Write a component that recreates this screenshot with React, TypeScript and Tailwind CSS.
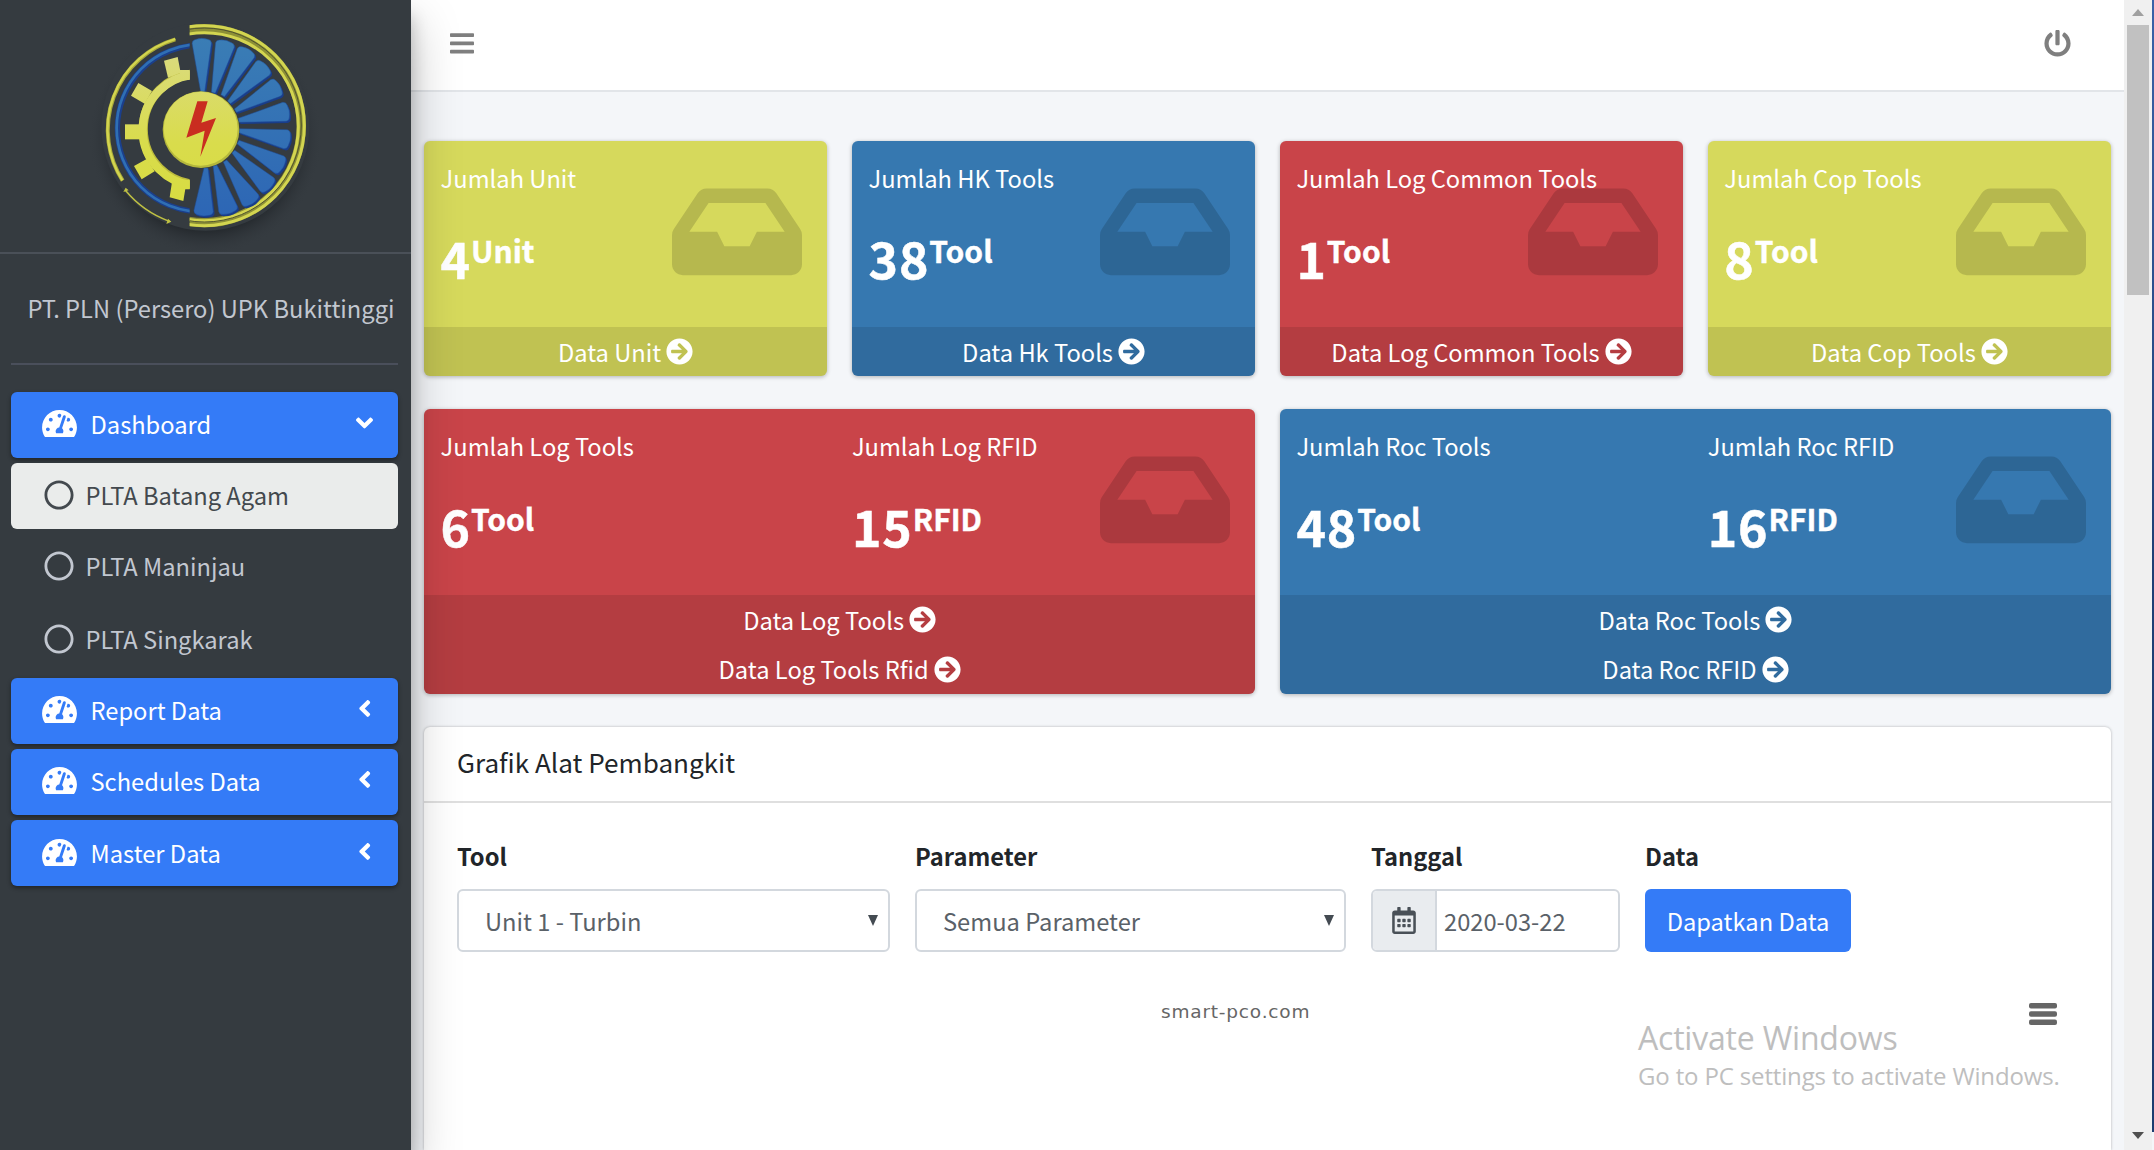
import React from "react";
import {
  FaAngleDown,
  FaAngleLeft,
  FaArrowCircleRight,
  FaInbox,
  FaPowerOff,
  FaRegCalendarAlt,
  FaRegCircle,
  FaTachometerAlt,
} from "react-icons/fa";

/* [inner x, inner y, outer x, outer y] of every turbine blade */
const blades = [
  [338, 246, 335, 86],
  [370, 248, 408, 92],
  [398, 257, 474, 117],
  [417, 277, 528, 165],
  [436, 302, 569, 227],
  [446, 331, 597, 303],
  [448, 362, 600, 390],
  [444, 396, 580, 470],
  [430, 425, 541, 533],
  [405, 453, 488, 580],
  [375, 467, 418, 610],
  [348, 474, 340, 617],
];

const bladePath = ([x1, y1, x2, y2]: number[]) => {
  const len = Math.hypot(x2 - x1, y2 - y1);
  const ux = (x2 - x1) / len;
  const uy = (y2 - y1) / len;
  const at = (along: number, side: number) =>
    `${(x1 + ux * along - uy * side).toFixed(1)} ${(y1 + uy * along + ux * side).toFixed(1)}`;
  return `M${at(0, -6)} L${at(len - 14, -29)} Q${at(len - 4, -29)} ${at(len - 2, -18)} Q${at(len + 4, 0)} ${at(len - 2, 18)} Q${at(len - 4, 29)} ${at(len - 14, 29)} L${at(0, 6)}Z`;
};

function Logo() {
  return (
    <svg viewBox="0 0 690 690" className="h-[230px] w-[230px] overflow-visible">
      <defs>
        <linearGradient id="gold" gradientUnits="userSpaceOnUse" x1="0" y1="140" x2="0" y2="570">
          <stop offset="0" stopColor="#dadb7c" />
          <stop offset="0.6" stopColor="#d9dc4c" />
          <stop offset="1" stopColor="#d8dc42" />
        </linearGradient>
        <linearGradient id="blue" gradientUnits="userSpaceOnUse" x1="0" y1="85" x2="0" y2="620">
          <stop offset="0" stopColor="#3a7db5" />
          <stop offset="1" stopColor="#2d66b5" />
        </linearGradient>
        <radialGradient id="halo">
          <stop offset="0.8" stopColor="#1d2125" stopOpacity="0.6" />
          <stop offset="1" stopColor="#343a40" stopOpacity="0" />
        </radialGradient>
        <clipPath id="right">
          <rect x="299" y="0" width="391" height="690" />
        </clipPath>
        <clipPath id="left">
          <rect x="0" y="0" width="299" height="690" />
        </clipPath>
      </defs>
      <circle cx="346" cy="385" r="350" fill="url(#halo)" />
      <circle cx="346" cy="350" r="312" fill="#353b40" />
      <g clipPath="url(#right)" fill="none">
        <circle cx="343" cy="347" r="291" stroke="#8d9036" strokeWidth="28" />
        <circle cx="343" cy="347" r="300" stroke="#d3d550" strokeWidth="9" />
        <circle cx="343" cy="350" r="282" stroke="#d3d550" strokeWidth="9" />
        <circle cx="343" cy="345" r="291" stroke="#50532f" strokeWidth="3" />
      </g>
      <path d="M256 88A283 283 0 0 0 98 512" fill="none" stroke="#a9aa38" strokeWidth="12" />
      <path d="M256 87A283 283 0 0 0 97 511" fill="none" stroke="#d3d550" strokeWidth="7" />
      <path d="M106 541Q160 606 238 634" fill="none" stroke="#bfc143" strokeWidth="4.5" />
      <path d="M100 546L107 533L116 541Z M229 642L244 635L234 626Z" fill="#bfc143" />
      <g clipPath="url(#left)" fill="none">
        <circle cx="332" cy="355" r="250" stroke="#1b3f8c" strokeWidth="16" />
        <circle cx="331" cy="354" r="251" stroke="#2f6fb4" strokeWidth="8" />
      </g>
      <g clipPath="url(#left)">
        <circle cx="326" cy="357" r="166" fill="none" stroke="#bcbb3c" strokeWidth="27" />
        <circle cx="324" cy="360" r="166" fill="none" stroke="url(#gold)" strokeWidth="25" />
      </g>
      <g fill="url(#gold)">
        <path d="M222 152L263 141L272 188L234 203Z" />
        <path d="M145 219L186 243L164 281L123 257Z" />
        <path d="M105 343H150V388H105Z" />
        <path d="M132 468L170 447L194 484L155 508Z" />
        <path d="M246 516L288 524L280 573L239 562Z" />
        <path d="M270 180H299V210H270Z M270 510H299V538H270Z" />
      </g>
      {blades.map((b) => (
        <path key={`s${b[2]}`} d={bladePath(b)} transform="translate(4 5)" fill="#193d8b" />
      ))}
      {blades.map((b) => (
        <path key={b[2]} d={bladePath(b)} fill="url(#blue)" stroke="#1f4d98" strokeWidth="1.5" />
      ))}
      <circle cx="333" cy="359" r="115" fill="#b4b73c" />
      <circle cx="332" cy="356" r="111" fill="url(#gold)" />
      <path d="M322 274H353L334 338L378 324L331 440L344 362L289 383Z" fill="#c92d20" />
    </svg>
  );
}

function MenuItem({ label, open }: { label: string; open?: boolean }) {
  return (
    <a className="flex h-[66px] items-center rounded-[6px] bg-[#347bf7] pl-[31px] text-white shadow-[0_2px_4px_rgba(0,0,0,.4)]">
      <FaTachometerAlt className="-mt-0.5 h-[31px] w-[35px]" />
      <span className="-mt-px ml-[13.5px] flex-1">{label}</span>
      {open ? (
        <FaAngleDown className="mr-[25px] -mt-1 h-[28px] w-[17px]" />
      ) : (
        <FaAngleLeft className="mr-[27px] -mt-1 h-[27px] w-[13.5px]" />
      )}
    </a>
  );
}

function SubItem({ label, active }: { label: string; active?: boolean }) {
  return (
    <a
      className={
        active
          ? "flex h-[66px] items-center rounded-[6px] bg-[#eaeceb] pl-[33px] text-[#43494e]"
          : "flex h-[66px] items-center rounded-[6px] pl-[33px] text-[#c2c7d0]"
      }
    >
      <FaRegCircle className="-mt-0.5 h-[30px] w-[30px]" />
      <span className="-mt-px ml-[11.5px]">{label}</span>
    </a>
  );
}

type Stat = { title: string; value: string; unit: string };

function StatCard({ tone, stats, links }: { tone: string; stats: Stat[]; links: string[] }) {
  return (
    <div
      className={`relative overflow-hidden rounded-[6px] text-white shadow-[0_1px_4px_rgba(0,0,0,.28)] ${tone}`}
    >
      <FaInbox className="absolute top-[32.5px] right-[25px] h-[115.6px] w-[130px] text-black/15" />
      <div className="relative flex h-[185.5px] gap-[25px] pr-[17px] pl-[16.6px]">
        {stats.map((s) => (
          <div key={s.title} className="flex-1">
            <div className="mt-[16.5px] h-[40px] leading-[40px]">{s.title}</div>
            <div className="mt-[29.5px] flex h-[60px] items-start font-bold">
              <span className="text-[50px] leading-[60px] tracking-[0.9px] [-webkit-text-stroke:0.5px_white]">
                {s.value}
              </span>
              <span className="text-[30px] leading-[46px] [-webkit-text-stroke:0.4px_white]">{s.unit}</span>
            </div>
          </div>
        ))}
      </div>
      <div className="flex flex-col bg-black/10">
        {links.map((l) => (
          <a key={l} className="flex h-[49.5px] items-center justify-center gap-[5px]">
            <span>{l}</span>
            <FaArrowCircleRight className="h-[27px] w-[27px]" />
          </a>
        ))}
      </div>
    </div>
  );
}

function Select({ value }: { value: string }) {
  return (
    <div className="flex h-[63px] items-center justify-between rounded-[6px] border-2 border-[#d3d8de] bg-white pr-[10px] pl-[26px] text-[#5a6168]">
      <span className="mt-px">{value}</span>
      <svg viewBox="0 0 10 11" className="h-[11px] w-[10px]">
        <path d="M0 0H10L5 11Z" fill="#444b52" />
      </svg>
    </div>
  );
}

const YELLOW = "bg-[#d6d95c]";
const BLUE = "bg-[#3678b0]";
const RED = "bg-[#c94449]";

export default function App() {
  return (
    <div className="flex h-[1150px] w-[2154px] overflow-hidden bg-[#f4f6f9] font-['Noto_Sans_CJK_SC','Source_Sans_Pro',sans-serif] text-[23.7px] leading-[40px] text-[#212529]">
      <aside className="relative z-10 h-full w-[411px] shrink-0 bg-[#353b40] shadow-[0_23px_46px_rgba(0,0,0,.25),0_16px_16px_rgba(0,0,0,.22)]">
        <div className="h-[254px] border-b-2 border-[#4a5058] pt-[10px] pl-[90px]">
          <Logo />
        </div>
        <div className="mx-[11px] h-[111px] w-[387px] border-b-2 border-[#4a4f5b] pt-[34px] pl-[16.5px] whitespace-nowrap text-[#c2c7d0]">
          PT. PLN (Persero) UPK Bukittinggi
        </div>
        <nav className="mx-[11px] mt-[26.5px] flex w-[387px] flex-col gap-[5.2px]">
          <MenuItem label="Dashboard" open />
          <SubItem label="PLTA Batang Agam" active />
          <SubItem label="PLTA Maninjau" />
          <div className="mt-[1.5px]">
            <SubItem label="PLTA Singkarak" />
          </div>
          <MenuItem label="Report Data" />
          <MenuItem label="Schedules Data" />
          <MenuItem label="Master Data" />
        </nav>
      </aside>

      <div className="flex w-[1713px] flex-col">
        <header className="flex h-[92px] shrink-0 items-start justify-between border-b-2 border-[#e2e5e9] bg-white pr-[53px] pl-[39px]">
          <svg viewBox="0 0 24 21" className="mt-[33px] h-[21px] w-[24px]" fill="#7f7f7f">
            <rect y="0.2" width="24" height="3.8" rx="0.8" />
            <rect y="8.4" width="24" height="3.8" rx="0.8" />
            <rect y="16.8" width="24" height="3.8" rx="0.8" />
          </svg>
          <FaPowerOff className="mt-[30px] h-[27px] w-[27px] text-[#7f7f7f]" />
        </header>

        <main className="flex flex-1 flex-col pt-[49.4px] pr-[13px] pl-[13px]">
          <section className="grid grid-cols-4 gap-x-[24.7px] gap-y-[33px]">
            <StatCard tone={YELLOW} stats={[{ title: "Jumlah Unit", value: "4", unit: "Unit" }]} links={["Data Unit"]} />
            <StatCard tone={BLUE} stats={[{ title: "Jumlah HK Tools", value: "38", unit: "Tool" }]} links={["Data Hk Tools"]} />
            <StatCard
              tone={RED}
              stats={[{ title: "Jumlah Log Common Tools", value: "1", unit: "Tool" }]}
              links={["Data Log Common Tools"]}
            />
            <StatCard tone={YELLOW} stats={[{ title: "Jumlah Cop Tools", value: "8", unit: "Tool" }]} links={["Data Cop Tools"]} />
            <div className="col-span-2">
              <StatCard
                tone={RED}
                stats={[
                  { title: "Jumlah Log Tools", value: "6", unit: "Tool" },
                  { title: "Jumlah Log RFID", value: "15", unit: "RFID" },
                ]}
                links={["Data Log Tools", "Data Log Tools Rfid"]}
              />
            </div>
            <div className="col-span-2">
              <StatCard
                tone={BLUE}
                stats={[
                  { title: "Jumlah Roc Tools", value: "48", unit: "Tool" },
                  { title: "Jumlah Roc RFID", value: "16", unit: "RFID" },
                ]}
                links={["Data Roc Tools", "Data Roc RFID"]}
              />
            </div>
          </section>

          <section className="mt-[33.6px] flex-1 rounded-t-[6px] bg-white shadow-[0_0_3px_rgba(0,0,0,.28)]">
            <div className="h-[76px] border-b-2 border-[#dfdfdf] pt-[15px] pl-[33px] text-[26.1px] leading-[40px]">
              Grafik Alat Pembangkit
            </div>
            <div className="flex gap-[25px] pt-[33px] pl-[33px]">
              <div className="w-[433px]">
                <div className="mb-[13px] font-bold">Tool</div>
                <Select value="Unit 1 - Turbin" />
              </div>
              <div className="w-[431px]">
                <div className="mb-[13px] font-bold">Parameter</div>
                <Select value="Semua Parameter" />
              </div>
              <div className="w-[249px]">
                <div className="mb-[13px] font-bold">Tanggal</div>
                <div className="flex h-[63px] overflow-hidden rounded-[6px] border-2 border-[#d3d8de] text-[#5a6168]">
                  <div className="flex w-[64px] items-center justify-center border-r-2 border-[#d3d8de] bg-[#e9ecef]">
                    <FaRegCalendarAlt className="h-[27px] w-[24px] text-[#495057]" />
                  </div>
                  <span className="pt-[10px] pl-[7px]">2020-03-22</span>
                </div>
              </div>
              <div>
                <div className="mb-[13px] font-bold">Data</div>
                <button className="h-[63px] w-[206px] rounded-[6px] bg-[#347bf7] text-white">Dapatkan Data</button>
              </div>
            </div>
            <div className="relative mt-[48px] flex items-start justify-between pr-[54px] pl-[737px]">
              <span className="font-['DejaVu_Sans',sans-serif] text-[18.5px] leading-[24px] tracking-[0.8px] text-[#666666]">
                smart-pco.com
              </span>
              <svg viewBox="0 0 28 22" className="mt-[3px] h-[22px] w-[28px]" fill="#666666">
                <rect width="28" height="5.6" rx="2" />
                <rect y="8.2" width="28" height="5.6" rx="2" />
                <rect y="16.4" width="28" height="5.6" rx="2" />
              </svg>
              <div className="absolute top-[17px] left-[1214px] font-['Open_Sans',sans-serif] whitespace-nowrap text-[#bebebe]">
                <div className="text-[32px] leading-[42px] tracking-[-0.2px]">Activate Windows</div>
                <div className="text-[24px] leading-[34px] tracking-[-0.15px]">Go to PC settings to activate Windows.</div>
              </div>
            </div>
          </section>
        </main>
      </div>

      <div className="flex w-[28px] flex-col items-center justify-between bg-[#f0f0f0] pt-[9px] pb-[11px]">
        <div className="flex flex-col items-center">
          <svg viewBox="0 0 12 7" className="h-[7px] w-[12px]">
            <path d="M0 7L6 0L12 7Z" fill="#a0a0a0" />
          </svg>
          <div className="mt-[9px] h-[270px] w-[22px] bg-[#c1c1c1]" />
        </div>
        <svg viewBox="0 0 12 7" className="h-[7px] w-[12px]">
          <path d="M0 0H12L6 7Z" fill="#505050" />
        </svg>
      </div>
      <div className="h-[1132px] w-[2px] bg-linear-to-b from-[#3a62a8] via-[#1f3f75] to-[#1d3c70]" />
    </div>
  );
}
